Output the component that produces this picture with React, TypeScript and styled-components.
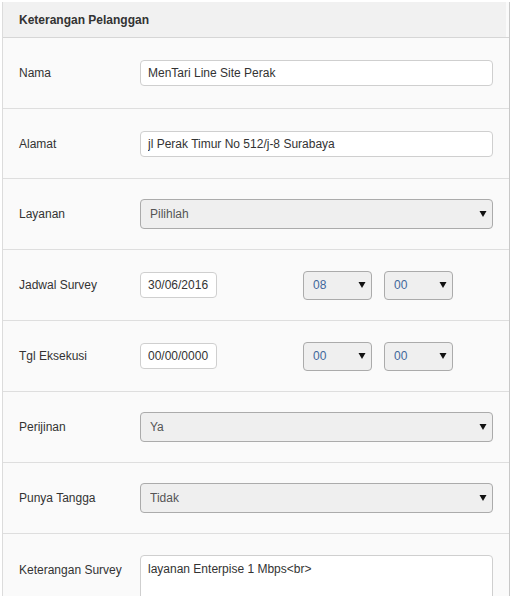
import React from 'react'
import styled, { createGlobalStyle } from 'styled-components'

const GlobalStyle = createGlobalStyle`
  html, body {
    margin: 0;
    padding: 0;
    background: #ffffff;
    font-family: "Liberation Sans", Arial, Helvetica, sans-serif;
    font-size: 12px;
    color: #333333;
    overflow: hidden;
  }
`

const Panel = styled.div`
  margin-left: 2px;
  width: 506px;
  min-height: 596px;
  border-left: 1px solid #dcdcdc;
  border-right: 1px solid #c8c8c8;
  background: #fafafa;
`

const PanelHeader = styled.div`
  margin-top: 2px;
  margin-right: 3px;
  height: 35px;
  display: flex;
  align-items: center;
  padding-left: 16px;
  background: #f1f1f1;
  font-weight: bold;
  color: #333333;
`

const HeaderLine = styled.div`
  border-top: 1px solid #d6d6d6;
`

const Row = styled.div<{ $top?: boolean; $h?: number }>`
  display: flex;
  align-items: ${(p) => (p.$top ? 'flex-start' : 'center')};
  height: ${(p) => p.$h ?? 70}px;
  padding: ${(p) => (p.$top ? '21px 16px 0 16px' : '0 16px')};
  box-sizing: ${(p) => (p.$top ? 'border-box' : 'content-box')};
  border-bottom: 1px solid #dedede;
  overflow: ${(p) => (p.$top ? 'visible' : 'hidden')};
`

const Label = styled.label<{ $offset?: number }>`
  width: 121px;
  flex: none;
  margin-top: ${(p) => p.$offset ?? 0}px;
  color: #333333;
`

const Controls = styled.div`
  flex: 1;
  display: flex;
  align-items: center;
`

const TextInput = styled.input<{ $width?: number }>`
  box-sizing: border-box;
  width: ${(p) => (p.$width ? `${p.$width}px` : '100%')};
  height: 26px;
  padding: 0 7px;
  border: 1px solid #cfcfcf;
  border-radius: 4px;
  background: #ffffff;
  font-family: inherit;
  font-size: 12px;
  color: #333333;
  outline: none;
`

const SelectWrap = styled.div<{ $width?: number; $gap?: number }>`
  position: relative;
  width: ${(p) => (p.$width ? `${p.$width}px` : '100%')};
  margin-left: ${(p) => p.$gap ?? 0}px;
  flex: none;
`

const Select = styled.select<{ $tall?: boolean; $accent?: boolean }>`
  appearance: none;
  -webkit-appearance: none;
  box-sizing: border-box;
  width: 100%;
  height: ${(p) => (p.$tall ? 30 : 29)}px;
  padding: 0 22px 0 9px;
  border: 1px solid #ababab;
  border-radius: 4px;
  background: #efefef;
  font-family: inherit;
  font-size: 12px;
  color: ${(p) => (p.$accent ? '#3f679b' : '#555555')};
  outline: none;
`

const Arrow = styled.span`
  position: absolute;
  right: 6px;
  top: 50%;
  transform: translateY(-50%);
  width: 8px;
  height: 7px;
  pointer-events: none;
  display: flex;
`

const TextArea = styled.textarea`
  box-sizing: border-box;
  width: 100%;
  height: 90px;
  padding: 6px 7px;
  border: 1px solid #cfcfcf;
  border-radius: 4px;
  background: #ffffff;
  font-family: inherit;
  font-size: 12px;
  color: #333333;
  resize: none;
  outline: none;
`

const Caret = () => (
  <Arrow>
    <svg width="8" height="7" viewBox="0 0 8 7">
      <path d="M0.5 0.5 H7.5 L4 6.5 Z" fill="#111111" />
    </svg>
  </Arrow>
)

const Dropdown = ({
  value,
  width,
  gap,
  tall,
  accent,
}: {
  value: string
  width?: number
  gap?: number
  tall?: boolean
  accent?: boolean
}) => (
  <SelectWrap $width={width} $gap={gap}>
    <Select $tall={tall} $accent={accent} defaultValue={value}>
      <option value={value}>{value}</option>
    </Select>
    <Caret />
  </SelectWrap>
)

const App = () => {
  return (
    <>
      <GlobalStyle />
      <Panel>
        <PanelHeader>Keterangan Pelanggan</PanelHeader>
        <HeaderLine />
        <Row>
          <Label>Nama</Label>
          <Controls>
            <TextInput defaultValue="MenTari Line Site Perak" />
          </Controls>
        </Row>
        <Row $h={69}>
          <Label>Alamat</Label>
          <Controls>
            <TextInput defaultValue="jl Perak Timur No 512/j-8 Surabaya" />
          </Controls>
        </Row>
        <Row>
          <Label>Layanan</Label>
          <Controls>
            <Dropdown value="Pilihlah" tall />
          </Controls>
        </Row>
        <Row>
          <Label>Jadwal Survey</Label>
          <Controls>
            <TextInput $width={77} defaultValue="30/06/2016" />
            <Dropdown value="08" width={69} gap={86} accent />
            <Dropdown value="00" width={69} gap={12} accent />
          </Controls>
        </Row>
        <Row>
          <Label>Tgl Eksekusi</Label>
          <Controls>
            <TextInput $width={77} defaultValue="00/00/0000" />
            <Dropdown value="00" width={69} gap={86} accent />
            <Dropdown value="00" width={69} gap={12} accent />
          </Controls>
        </Row>
        <Row>
          <Label>Perijinan</Label>
          <Controls>
            <Dropdown value="Ya" tall />
          </Controls>
        </Row>
        <Row>
          <Label>Punya Tangga</Label>
          <Controls>
            <Dropdown value="Tidak" tall />
          </Controls>
        </Row>
        <Row $top>
          <Label $offset={8}>Keterangan Survey</Label>
          <Controls>
            <TextArea defaultValue="layanan Enterpise 1 Mbps<br>" />
          </Controls>
        </Row>
      </Panel>
    </>
  )
}

export default App
